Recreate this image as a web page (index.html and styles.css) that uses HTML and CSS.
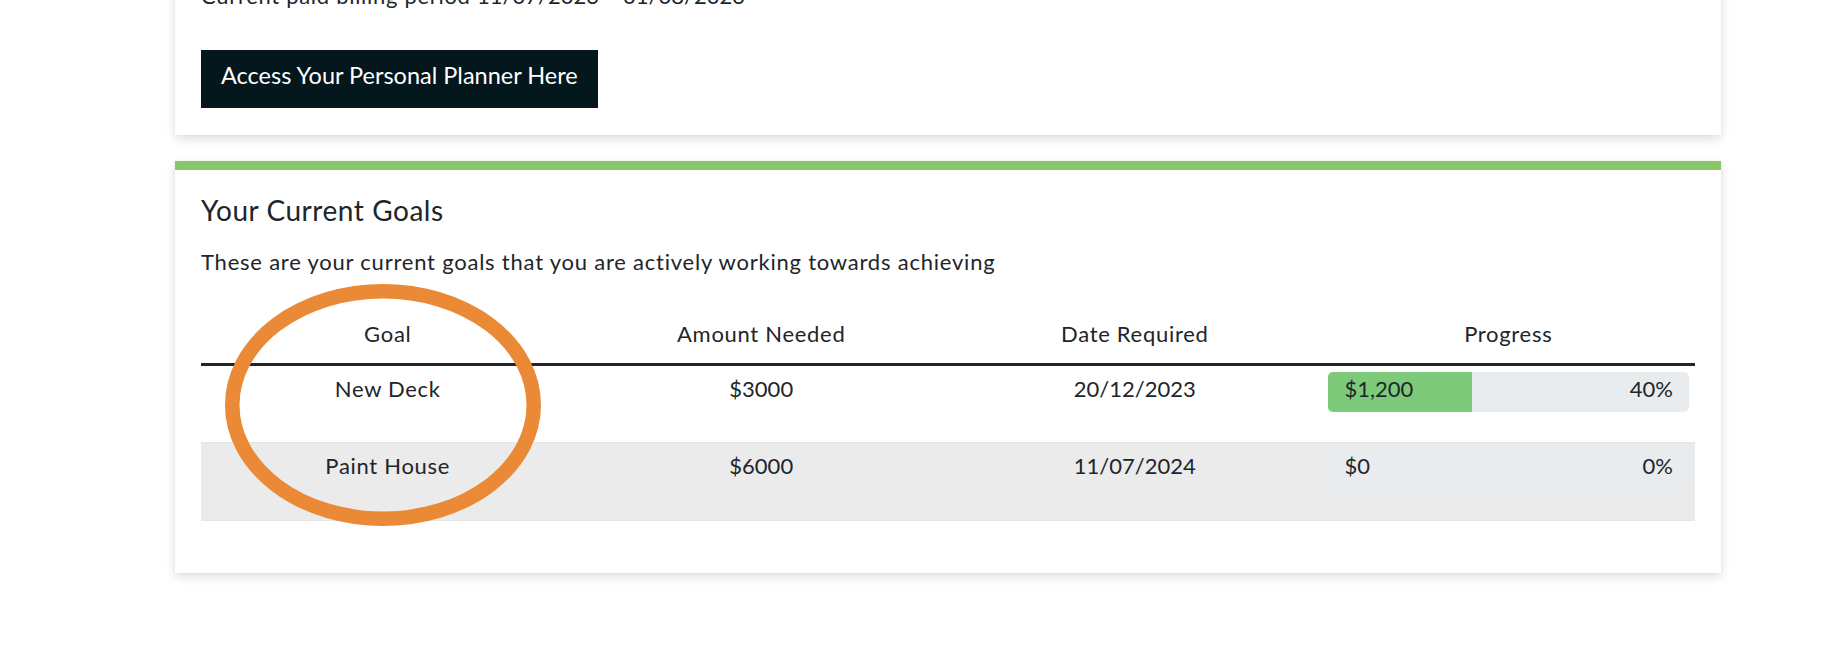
FILE: index.html
```html
<!DOCTYPE html>
<html lang="en">
<head>
<meta charset="utf-8">
<title>Your Current Goals</title>
<link rel="stylesheet" href="styles.css">
</head>
<body>
<div class="page">
  <section class="card card-plan">
    <p class="billing">Current paid billing period <span class="num">11/07/2023 – 01/08/2023</span></p>
    <a class="btn-dark" href="#">Access Your Personal Planner Here</a>
  </section>

  <section class="card card-goals">
    <h4 class="goals-title">Your Current Goals</h4>
    <p class="goals-sub">These are your current goals that you are actively working towards achieving</p>
    <table class="goals-table">
      <thead>
        <tr>
          <th>Goal</th>
          <th>Amount Needed</th>
          <th>Date Required</th>
          <th>Progress</th>
        </tr>
      </thead>
      <tbody>
        <tr class="row-first">
          <td>New Deck</td>
          <td class="num">$3000</td>
          <td class="num">20/12/2023</td>
          <td class="cell-progress">
            <div class="progress">
              <div class="progress-fill" style="width: 40%"></div>
              <span class="progress-amount">$1,200</span>
              <span class="progress-pct">40%</span>
            </div>
          </td>
        </tr>
        <tr class="row-striped">
          <td>Paint House</td>
          <td class="num">$6000</td>
          <td class="num">11/07/2024</td>
          <td class="cell-progress">
            <div class="progress">
              <div class="progress-fill" style="width: 0%"></div>
              <span class="progress-amount">$0</span>
              <span class="progress-pct">0%</span>
            </div>
          </td>
        </tr>
      </tbody>
    </table>
    <svg class="annotation" width="316" height="242" viewBox="0 0 316 242" aria-hidden="true">
      <ellipse cx="158" cy="121" rx="150.75" ry="113.75" fill="none" stroke="#ea8a37" stroke-width="14.5"/>
    </svg>
  </section>
</div>
</body>
</html>
```

FILE: styles.css
```css
html, body {
  margin: 0;
  padding: 0;
  background: #ffffff;
}

body {
  min-height: 668px;
  font-family: "Lato", "Liberation Sans", sans-serif;
  font-size: 22px;
  line-height: 33px;
  letter-spacing: 0.7px;
  color: #212529;
}

.num {
  letter-spacing: 0;
}

.page {
  width: 1546px;
  margin-left: 175px;
  display: flex;
  flex-direction: column;
  gap: 26px;
}

.card {
  background: #ffffff;
  box-shadow: 0 4px 10px rgba(0, 0, 0, 0.13), 0 0 3px rgba(0, 0, 0, 0.05);
}

.card-plan {
  margin-top: -47px;
  padding: 26px 26px 27px;
}

.billing {
  margin: 0 0 38px;
}

.btn-dark {
  display: inline-block;
  background: #03171c;
  color: #ffffff;
  text-decoration: none;
  font-size: 23.5px;
  padding: 8.7px 20px 16.3px;
  line-height: 33px;
  letter-spacing: 0;
}

.card-goals {
  position: relative;
  border-top: 9px solid #8cc66b;
  padding: 24px 26px 26px;
}

.goals-title {
  margin: 0 0 17px;
  font-size: 28px;
  line-height: 33.6px;
  font-weight: 400;
  letter-spacing: 0.55px;
}

.goals-sub {
  margin: 0 0 31px;
  letter-spacing: 0.78px;
}

.goals-table {
  width: 100%;
  border-collapse: separate;
  border-spacing: 0;
  table-layout: fixed;
  margin-bottom: 26px;
}

.goals-table th {
  font-weight: 400;
  text-align: center;
  padding: 8px 8px 13px;
  border-bottom: 3px solid #212529;
}

.goals-table td {
  text-align: center;
  vertical-align: top;
  padding: 6px 8px 9px;
  border-bottom: 1px solid #e4e4e4;
}

.goals-table td.cell-progress {
  padding-left: 6px;
  padding-right: 6px;
}

.goals-table .row-first td {
  padding-top: 6px;
  padding-bottom: 8px;
}

.row-striped td {
  background: #ebebeb;
}

.progress {
  position: relative;
  display: flex;
  justify-content: space-between;
  height: 40px;
  margin-bottom: 22px;
  padding: 0 16px 0 17px;
  background: #e9ecef;
  border-radius: 5px;
  overflow: hidden;
  line-height: 33px;
  letter-spacing: 0;
}

.progress-fill {
  position: absolute;
  left: 0;
  top: 0;
  bottom: 0;
  background: #7dcb7a;
}

.progress-amount,
.progress-pct {
  position: relative;
}

.annotation {
  position: absolute;
  left: 50px;
  top: 114px;
  pointer-events: none;
}
```
